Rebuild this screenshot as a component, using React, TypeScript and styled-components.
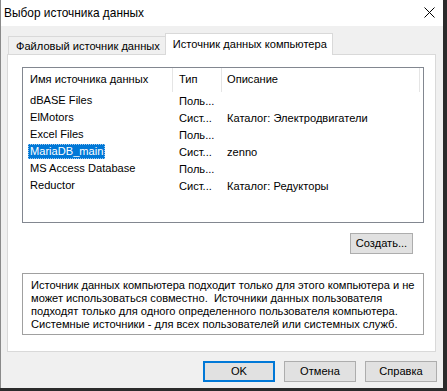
import { FC } from 'react'
import styled, { createGlobalStyle } from 'styled-components'

type Source = { name: string; type: string; desc: string }

const sources: Source[] = [
  { name: 'dBASE Files', type: 'Поль...', desc: '' },
  { name: 'ElMotors', type: 'Сист...', desc: 'Каталог: Электродвигатели' },
  { name: 'Excel Files', type: 'Поль...', desc: '' },
  { name: 'MariaDB_main', type: 'Сист...', desc: 'zenno' },
  { name: 'MS Access Database', type: 'Поль...', desc: '' },
  { name: 'Reductor', type: 'Сист...', desc: 'Каталог: Редукторы' },
]

const App: FC = () => {
  return (
    <>
      <GlobalStyle />
      <Window>
        <TitleBar>
          <Title>Выбор источника данных</Title>
          <CloseButton>
            <svg width="11" height="11" viewBox="0 0 11 11">
              <path d="M0.5 0.5 L10.5 10.5 M10.5 0.5 L0.5 10.5" stroke="#000" strokeWidth="1" />
            </svg>
          </CloseButton>
        </TitleBar>

        <Body>
          <TabStrip>
            <Tab>Файловый источник данных</Tab>
            <Tab $active>Источник данных компьютера</Tab>
          </TabStrip>

          <Panel>
            <ListView>
              <HeaderRow>
                <HeaderCell $w={150} $pad={7}>Имя источника данных</HeaderCell>
                <HeaderCell $w={49} $pad={6}>Тип</HeaderCell>
                <HeaderCell $w={198} $pad={5}>Описание</HeaderCell>
              </HeaderRow>
              {sources.map((s) => (
                <Row key={s.name}>
                  <Cell $w={150} $pad={5}>
                    <NameText $selected={s.name === 'MariaDB_main'}>{s.name}</NameText>
                  </Cell>
                  <Cell $w={49} $pad={6}>{s.type}</Cell>
                  <Cell $w={198} $pad={5}>{s.desc}</Cell>
                </Row>
              ))}
            </ListView>

            <CreateRow>
              <Button $w={63}>Создать...</Button>
            </CreateRow>

            <InfoBox>
              Источник данных компьютера подходит только для этого компьютера и не<br />
              может использоваться совместно.&nbsp; Источники данных пользователя<br />
              подходят только для одного определенного пользователя компьютера.<br />
              Системные источники - для всех пользователей или системных служб.
            </InfoBox>
          </Panel>

          <Footer>
            <Button $w={72} $primary>OK</Button>
            <Button $w={72}>Отмена</Button>
            <Button $w={72}>Справка</Button>
          </Footer>
        </Body>
      </Window>
    </>
  )
}

const GlobalStyle = createGlobalStyle`
  html, body {
    margin: 0;
    padding: 0;
    background: #2b2b2b;
    width: 447px;
    height: 391px;
    overflow: hidden;
  }
  body {
    font-family: "Segoe UI", "Liberation Sans", Arial, sans-serif;
    font-size: 11.1px;
    color: #000;
  }
`

const Window = styled.div`
  box-sizing: border-box;
  width: 443px;
  height: 388px;
  background: #f0f0f0;
  border-left: 1px solid #8a8a8a;
  display: flex;
  flex-direction: column;
`

const TitleBar = styled.div`
  height: 26px;
  background: #fff;
  display: flex;
  align-items: center;
  justify-content: space-between;
  padding-left: 3px;
  flex-shrink: 0;
`

const Title = styled.span`
  font-size: 11.9px;
  margin-top: -1px;
`

const CloseButton = styled.div`
  width: 28px;
  height: 26px;
  display: flex;
  align-items: center;
  justify-content: center;
  margin-top: -2px;
`

const Body = styled.div`
  padding: 7px 6px 0 6px;
  display: flex;
  flex-direction: column;
`

const TabStrip = styled.div`
  display: flex;
  align-items: flex-end;
  height: 21px;
  padding-left: 1px;
  position: relative;
  z-index: 1;
`

const Tab = styled.div<{ $active?: boolean }>`
  box-sizing: border-box;
  height: ${(p) => (p.$active ? '22px' : '18px')};
  margin-bottom: ${(p) => (p.$active ? '-1px' : '0')};
  padding: 0 5px 0 7px;
  display: flex;
  align-items: center;
  border: 1px solid #d9d9d9;
  border-bottom: none;
  background: ${(p) => (p.$active ? '#fff' : '#f0f0f0')};
  ${(p) => (p.$active ? 'padding-bottom: 2px;' : 'border-right: none;')}
  white-space: nowrap;
`

const Panel = styled.div`
  box-sizing: border-box;
  width: 429px;
  height: 298px;
  background: #fff;
  border: 1px solid #d9d9d9;
  padding: 12px 11px 0 14px;
  display: flex;
  flex-direction: column;
`

const ListView = styled.div`
  box-sizing: border-box;
  width: 402px;
  height: 156px;
  border: 1px solid #828790;
  background: #fff;
`

const HeaderRow = styled.div`
  display: flex;
  height: 24px;
`

const HeaderCell = styled.div<{ $w: number; $pad: number }>`
  box-sizing: border-box;
  width: ${(p) => p.$w}px;
  padding-left: ${(p) => p.$pad}px;
  padding-bottom: 2px;
  display: flex;
  align-items: center;
  border-right: 1px solid #e5e5e5;
  white-space: nowrap;
`

const Row = styled.div`
  display: flex;
  height: 17px;
  align-items: center;
`

const Cell = styled.div<{ $w: number; $pad: number }>`
  box-sizing: border-box;
  width: ${(p) => p.$w}px;
  padding-left: ${(p) => p.$pad}px;
  white-space: nowrap;
  overflow: hidden;
`

const NameText = styled.span<{ $selected?: boolean }>`
  display: inline-block;
  padding: 0 2px;
  line-height: 15px;
  ${(p) =>
    p.$selected &&
    `
    background: #0078d7;
    color: #fff;
    outline: 1px dotted #9cc8ef;
    outline-offset: -1px;
  `}
`

const CreateRow = styled.div`
  display: flex;
  justify-content: flex-end;
  margin-top: 10px;
  width: 391px;
`

const Button = styled.div<{ $w: number; $primary?: boolean }>`
  box-sizing: border-box;
  width: ${(p) => p.$w}px;
  height: 21px;
  background: #e1e1e1;
  border: ${(p) => (p.$primary ? '2px solid #0078d7' : '1px solid #adadad')};
  display: flex;
  align-items: center;
  justify-content: center;
  padding-bottom: 1px;
`

const InfoBox = styled.div`
  box-sizing: border-box;
  width: 402px;
  height: 62px;
  margin-top: 19px;
  border: 1px solid #a0a0a0;
  padding: 5px 0 0 8px;
  line-height: 13px;
  white-space: nowrap;
`

const Footer = styled.div`
  display: flex;
  justify-content: flex-end;
  gap: 9px;
  width: 430px;
  margin-top: 9px;
`

export default App
